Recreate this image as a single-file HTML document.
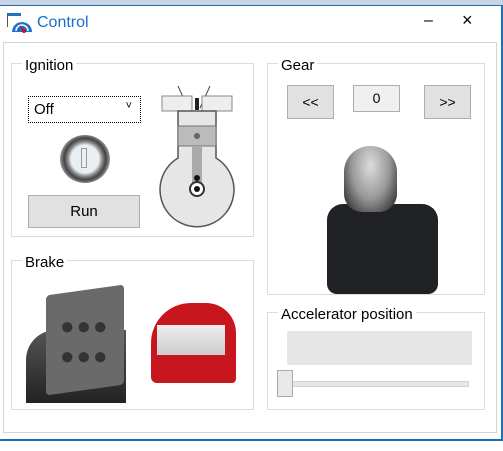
<!DOCTYPE html><html><head><style>
*{margin:0;padding:0;box-sizing:border-box}
body{width:503px;height:451px;background:#fff;position:relative;overflow:hidden;font-family:"Liberation Sans",sans-serif;font-size:14px;color:#000}
.a{position:absolute}
.grp{position:absolute;border:1px solid #dcdcdc}
.lbl{position:absolute;background:#fff;padding:0 3px;top:-7px;left:10px;font-size:15px;line-height:18px}
.btn{position:absolute;background:#e1e1e1;border:1px solid #adadad;text-align:center;font-size:14px}
</style></head><body>
<div class="a" style="left:0;top:0;width:503px;height:5px;background:#c9d5e6"></div>
<div class="a" style="left:0;top:5px;width:503px;height:1px;background:#1a6fb5"></div>
<div class="a" style="left:501px;top:5px;width:2px;height:436px;background:#1a6fb5"></div>
<div class="a" style="left:0;top:439px;width:503px;height:2px;background:#1a6fb5"></div>
<svg class="a" style="left:6px;top:12px" width="26" height="22" viewBox="0 0 26 22"><rect x="1" y="1" width="14" height="3" fill="#1e73c8"/><rect x="1" y="1" width="1" height="14" fill="#555"/><path d="M6 20 A10 10 0 0 1 26 20 Z" fill="#1e73c8"/><path d="M10 19 A6 6 0 0 1 22 19" fill="none" stroke="#fff" stroke-width="1.5"/><circle cx="18" cy="19" r="2" fill="#c0102a"/><line x1="18" y1="19" x2="14" y2="14" stroke="#c0102a" stroke-width="1.5"/></svg>
<div class="a" style="left:37px;top:14px;font-size:16px;color:#1a6fc9">Control</div>
<div class="a" style="left:424px;top:12px;font-size:16px">–</div>
<div class="a" style="left:462px;top:10px;font-size:18px">×</div>
<div class="a" style="left:3px;top:42px;width:494px;height:391px;border:1px solid #d4d4d4"></div>

<div class="grp" style="left:11px;top:63px;width:243px;height:174px"><div class="lbl">Ignition</div></div>
<div class="a" style="left:28px;top:96px;width:113px;height:27px;border:1px dotted #000;padding:4px 5px;font-size:15px">Off<span style="position:absolute;right:8px;top:3px;font-size:11px">˅</span></div>
<div class="a" style="left:60px;top:135px;width:50px;height:48px;border-radius:50%;background:radial-gradient(circle,#e8f0f4 0 40%,#888 50%,#444 60%,#999 72%,#333 85%)"></div>
<div class="a" style="left:81px;top:148px;width:6px;height:20px;border:1px solid #999;background:#eee"></div>
<div class="btn" style="left:28px;top:195px;width:112px;height:33px;line-height:31px;font-size:15px">Run</div>
<svg class="a" style="left:158px;top:86px" width="78" height="142" viewBox="0 0 78 142"><path d="M20 0 L30 22 M52 0 L42 22" stroke="#444"/><rect x="4" y="10" width="30" height="15" fill="#eee" stroke="#888"/><rect x="44" y="10" width="30" height="15" fill="#eee" stroke="#888"/><rect x="37" y="12" width="4" height="12" fill="#222"/><path d="M20 25 H58 V72 A37 37 0 1 1 20 72 Z" fill="#e6e6e6" stroke="#555" stroke-width="1.5"/><rect x="20" y="40" width="38" height="20" fill="#bbb" stroke="#777"/><circle cx="39" cy="50" r="3" fill="#666"/><rect x="34" y="60" width="10" height="40" fill="#aaa"/><circle cx="39" cy="103" r="7" fill="#fff" stroke="#333" stroke-width="2"/><circle cx="39" cy="103" r="3" fill="#111"/><circle cx="39" cy="92" r="3" fill="#111"/></svg>

<div class="grp" style="left:11px;top:260px;width:243px;height:150px"><div class="lbl">Brake</div></div>
<div class="a" style="left:26px;top:330px;width:100px;height:73px;background:linear-gradient(#555,#222);border-radius:30px 0 0 0"></div>
<div class="a" style="left:46px;top:290px;width:78px;height:100px;background:#6a6a6a;transform:skewY(-8deg);border-radius:4px"></div>
<div class="a" style="left:60px;top:312px;font-size:24px;color:#333;letter-spacing:2px;line-height:30px">●●●<br>●●●</div>
<div class="a" style="left:151px;top:303px;width:85px;height:80px;background:#c8161e;border-radius:40px 30px 4px 6px"></div>
<div class="a" style="left:157px;top:325px;width:68px;height:30px;background:linear-gradient(#eee,#ccc)"></div>

<div class="grp" style="left:267px;top:63px;width:218px;height:232px"><div class="lbl">Gear</div></div>
<div class="btn" style="left:287px;top:85px;width:47px;height:34px;line-height:32px">&lt;&lt;</div>
<div class="btn" style="left:353px;top:85px;width:47px;height:27px;line-height:24px;background:#f0f0f0">0</div>
<div class="btn" style="left:424px;top:85px;width:47px;height:34px;line-height:32px">&gt;&gt;</div>
<div class="a" style="left:327px;top:204px;width:111px;height:90px;background:#202226;border-radius:16px 16px 10px 10px"></div>
<div class="a" style="left:344px;top:146px;width:53px;height:66px;background:radial-gradient(ellipse at 50% 30%,#ddd,#999 50%,#333 90%);border-radius:26px 26px 18px 18px"></div>

<div class="grp" style="left:267px;top:312px;width:218px;height:98px"><div class="lbl" style="font-size:15px">Accelerator position</div></div>
<div class="a" style="left:287px;top:331px;width:185px;height:34px;background:#e6e6e6"></div>
<div class="a" style="left:278px;top:381px;width:191px;height:6px;background:#e7e7e7;border:1px solid #d6d6d6"></div>
<div class="a" style="left:277px;top:370px;width:16px;height:27px;background:#e8e8e8;border:1px solid #aaa"></div>
</body></html>
